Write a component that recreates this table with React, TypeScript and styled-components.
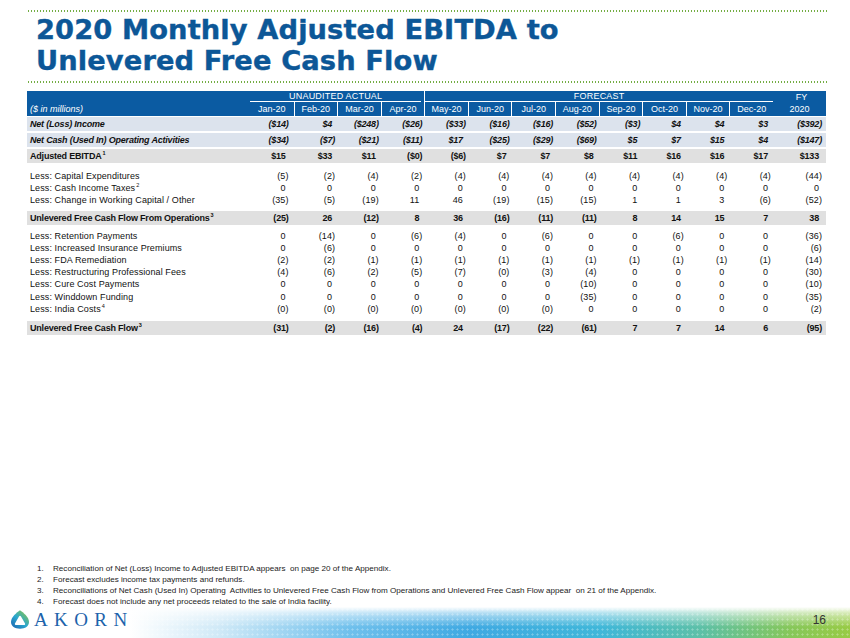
import React from 'react';
import styled, { createGlobalStyle } from 'styled-components';

const GlobalStyle = createGlobalStyle`
  html, body {
    margin: 0;
    padding: 0;
    background: #fff;
  }
  body {
    font-family: 'Liberation Sans', Arial, sans-serif;
  }
`;

type RowKind = 'net' | 'sub' | 'plain';

interface IRow {
    label: string;
    sup?: string;
    kind: RowKind;
    gap?: number;
    values: Array<string>;
}

const MONTHS = ['Jan-20', 'Feb-20', 'Mar-20', 'Apr-20', 'May-20', 'Jun-20', 'Jul-20', 'Aug-20', 'Sep-20', 'Oct-20', 'Nov-20', 'Dec-20'];

const ROWS: Array<IRow> = [
    { label: 'Net (Loss) Income', kind: 'net', gap: 1, values: ['($14)', '$4', '($248)', '($26)', '($33)', '($16)', '($16)', '($52)', '($3)', '$4', '$4', '$3', '($392)'] },
    { label: 'Net Cash (Used In) Operating Activities', kind: 'net', gap: 2, values: ['($34)', '($7)', '($21)', '($11)', '$17', '($25)', '($29)', '($69)', '$5', '$7', '$15', '$4', '($147)'] },
    { label: 'Adjusted EBITDA', sup: '1', kind: 'sub', gap: 2, values: ['$15', '$33', '$11', '($0)', '($6)', '$7', '$7', '$8', '$11', '$16', '$16', '$17', '$133'] },
    { label: 'Less:  Capital Expenditures', kind: 'plain', gap: 7, values: ['(5)', '(2)', '(4)', '(2)', '(4)', '(4)', '(4)', '(4)', '(4)', '(4)', '(4)', '(4)', '(44)'] },
    { label: 'Less:  Cash Income Taxes', sup: '2', kind: 'plain', values: ['0', '0', '0', '0', '0', '0', '0', '0', '0', '0', '0', '0', '0'] },
    { label: 'Less:  Change in Working Capital / Other', kind: 'plain', values: ['(35)', '(5)', '(19)', '11', '46', '(19)', '(15)', '(15)', '1', '1', '3', '(6)', '(52)'] },
    { label: 'Unlevered Free Cash Flow From Operations', sup: '3', kind: 'sub', gap: 4, values: ['(25)', '26', '(12)', '8', '36', '(16)', '(11)', '(11)', '8', '14', '15', '7', '38'] },
    { label: 'Less:  Retention Payments', kind: 'plain', gap: 5, values: ['0', '(14)', '0', '(6)', '(4)', '0', '(6)', '0', '0', '(6)', '0', '0', '(36)'] },
    { label: 'Less:  Increased Insurance Premiums', kind: 'plain', values: ['0', '(6)', '0', '0', '0', '0', '0', '0', '0', '0', '0', '0', '(6)'] },
    { label: 'Less:  FDA Remediation', kind: 'plain', values: ['(2)', '(2)', '(1)', '(1)', '(1)', '(1)', '(1)', '(1)', '(1)', '(1)', '(1)', '(1)', '(14)'] },
    { label: 'Less:  Restructuring Professional Fees', kind: 'plain', values: ['(4)', '(6)', '(2)', '(5)', '(7)', '(0)', '(3)', '(4)', '0', '0', '0', '0', '(30)'] },
    { label: 'Less:  Cure Cost Payments', kind: 'plain', values: ['0', '0', '0', '0', '0', '0', '0', '(10)', '0', '0', '0', '0', '(10)'] },
    { label: 'Less:  Winddown Funding', kind: 'plain', values: ['0', '0', '0', '0', '0', '0', '0', '(35)', '0', '0', '0', '0', '(35)'] },
    { label: 'Less:  India Costs', sup: '4', kind: 'plain', values: ['(0)', '(0)', '(0)', '(0)', '(0)', '(0)', '(0)', '0', '0', '0', '0', '0', '(2)'] },
    { label: 'Unlevered Free Cash Flow', sup: '3', kind: 'sub', gap: 6, values: ['(31)', '(2)', '(16)', '(4)', '24', '(17)', '(22)', '(61)', '7', '7', '14', '6', '(95)'] },
];

const NOTES = [
    'Reconciliation of Net (Loss) Income to Adjusted EBITDA appears  on page 20 of the Appendix.',
    'Forecast excludes income tax payments and refunds.',
    'Reconciliations of Net Cash (Used In) Operating  Activities to Unlevered Free Cash Flow from Operations and Unlevered Free Cash Flow appear  on 21 of the Appendix.',
    'Forecast does not include any net proceeds related to the sale of India facility.',
];

const Slide = styled.div`
    width: 850px;
    height: 638px;
    overflow: hidden;
    display: flex;
    flex-direction: column;
    background: #fff;
`;

const TitleBlock = styled.header`
    padding-top: 10px;
`;

const DottedRule = styled.div`
    margin: 0 23px 0 27px;
    height: 2px;
    background-image: radial-gradient(circle, #74ad44 0.75px, transparent 1.05px);
    background-size: 3px 2px;
    background-repeat: repeat-x;
`;

const Title = styled.h1`
    margin: 2px 0 5px 36px;
    font-family: 'DejaVu Sans', Verdana, sans-serif;
    font-weight: bold;
    font-size: 27.3px;
    line-height: 31px;
    color: #0c5797;
    letter-spacing: 0.1px;
    -webkit-text-stroke: 0.4px #0c5797;
`;

const Table = styled.div`
    margin: 8px 0 0 27px;
    width: 799px;
    font-size: 9px;
    color: #111;
`;

const Grid = styled.div`
    display: grid;
    grid-template-columns: 223px repeat(12, 1fr) 53px;
`;

const Head = styled(Grid)`
    background: #0b5ba2;
    color: #fff;
    grid-template-rows: 11px 14px;
`;

const GroupLabel = styled.div<{ $span: number; $split?: boolean }>`
    grid-column: span ${(p) => p.$span};
    display: flex;
    align-items: flex-end;
    justify-content: center;
    margin-right: ${(p) => (p.$split ? 0 : 3)}px;
    border-bottom: 1px solid #fff;
    border-left: ${(p) => (p.$split ? '1px solid #fff' : 'none')};
    letter-spacing: 0.2px;
    line-height: 10px;
`;

const FyLabel = styled.div`
    display: flex;
    align-items: flex-end;
    justify-content: center;
    line-height: 10px;
    padding-left: 4px;
`;

const UnitsLabel = styled.div`
    grid-column: 1;
    font-style: italic;
    display: flex;
    align-items: center;
    padding-left: 3px;
`;

const MonthLabel = styled.div<{ $sep: boolean }>`
    display: flex;
    align-items: center;
    justify-content: center;
    border-left: ${(p) => (p.$sep ? '1px solid #fff' : 'none')};
`;

const DataRow = styled(Grid)<{ $kind: RowKind; $gap: number }>`
    margin-top: ${(p) => p.$gap}px;
    height: ${(p) => (p.$kind === 'plain' ? '12.2px' : '14px')};
    align-items: center;
    background: ${(p) => (p.$kind === 'net' ? '#dce3ed' : p.$kind === 'sub' ? '#e0e0e0' : 'transparent')};
    font-weight: ${(p) => (p.$kind === 'plain' ? 'normal' : 'bold')};
    font-style: ${(p) => (p.$kind === 'net' ? 'italic' : 'normal')};
    letter-spacing: ${(p) => (p.$kind === 'plain' ? '0.1px' : '-0.2px')};
`;

const Label = styled.div`
    padding-left: 3px;
    white-space: nowrap;
`;

const Sup = styled.sup`
    font-size: 5.5px;
    line-height: 0;
    vertical-align: 4px;
    margin-left: 1px;
`;

const Value = styled.div<{ $paren: boolean }>`
    text-align: right;
    white-space: nowrap;
    padding-right: ${(p) => (p.$paren ? 2 : 5)}px;

    &:nth-child(2) {
        padding-right: ${(p) => (p.$paren ? 5 : 8)}px;
    }

    &:last-child {
        padding-right: ${(p) => (p.$paren ? 4 : 7)}px;
    }
`;

const Spacer = styled.div`
    flex: 1;
`;

const Notes = styled.ol`
    margin: 0;
    padding: 0 0 0 37px;
    list-style: none;
    font-size: 8.1px;
    line-height: 11px;
    color: #222;
`;

const Note = styled.li`
    display: flex;
    white-space: pre;
`;

const NoteNum = styled.span`
    width: 16px;
    flex: none;
`;

const Footer = styled.footer`
    height: 31px;
    display: flex;
    align-items: center;
    padding: 0 24px 6px 10px;
    box-sizing: border-box;
    background-color: #fff;
    background-image:
        linear-gradient(to bottom, #fff 0px, rgba(255, 255, 255, 0.55) 7px, rgba(255, 255, 255, 0) 20px),
        radial-gradient(circle, rgba(255, 255, 255, 0.3) 0.9px, transparent 1.2px),
        linear-gradient(to right, #fff 0px, #fff 130px, #cfe9f7 220px, #6fc0ec 350px, #3fa9e2 470px, #3fb7d9 600px, #5cc0a8 700px, #86c75a 790px, #98cb45 850px);
    background-size: 100% 100%, 5px 5px, 100% 100%;
`;

const Logo = styled.div`
    display: flex;
    align-items: center;
    gap: 4px;
`;

const LogoWord = styled.span`
    font-family: 'Liberation Serif', 'Times New Roman', serif;
    font-size: 19px;
    letter-spacing: 6.4px;
    color: #1d63ab;
    line-height: 1;
`;

const PageNum = styled.span`
    margin-left: auto;
    font-size: 12px;
    color: #333;
`;

const LogoMark: React.FC = () => (
    <svg width="20" height="21" viewBox="0 0 24 25">
        <defs>
            <linearGradient id="akMark" x1="0" y1="1" x2="0.9" y2="0">
                <stop offset="0" stopColor="#1b5fae" />
                <stop offset="0.5" stopColor="#2aa8cf" />
                <stop offset="1" stopColor="#8dc63f" />
            </linearGradient>
        </defs>
        <path
            d="M12 1.5 C15.8 4.2 22.8 9.6 22.8 15.6 C22.8 20.6 18.2 23.6 12 23.6 C5.8 23.6 1.2 20.6 1.2 15.6 C1.2 9.6 8.2 4.2 12 1.5 Z"
            fill="url(#akMark)"
        />
        <path d="M12 9.2 L17 18 L7 18 Z" fill="#fff" stroke="#fff" strokeWidth="2.4" strokeLinejoin="round" />
    </svg>
);

const App: React.FC = () => {
    return (
        <>
            <GlobalStyle />
            <Slide>
                <TitleBlock>
                    <DottedRule />
                    <Title>
                        2020 Monthly Adjusted EBITDA to
                        <br />
                        Unlevered Free Cash Flow
                    </Title>
                    <DottedRule />
                </TitleBlock>

                <Table>
                    <Head>
                        <div />
                        <GroupLabel $span={4}>UNAUDITED ACTUAL</GroupLabel>
                        <GroupLabel $span={8} $split>FORECAST</GroupLabel>
                        <FyLabel>FY</FyLabel>
                        <UnitsLabel>($ in millions)</UnitsLabel>
                        {MONTHS.map((m, i) => (
                            <MonthLabel key={m} $sep={i > 0}>{m}</MonthLabel>
                        ))}
                        <MonthLabel $sep={false}>2020</MonthLabel>
                    </Head>

                    {ROWS.map((row) => (
                        <DataRow key={row.label} $kind={row.kind} $gap={row.gap ?? 0}>
                            <Label>
                                {row.label}
                                {row.sup && <Sup>{row.sup}</Sup>}
                            </Label>
                            {row.values.map((v, i) => (
                                <Value key={i} $paren={v.endsWith(')')}>{v}</Value>
                            ))}
                        </DataRow>
                    ))}
                </Table>

                <Spacer />

                <Notes>
                    {NOTES.map((n, i) => (
                        <Note key={i}>
                            <NoteNum>{i + 1}.</NoteNum>
                            {n}
                        </Note>
                    ))}
                </Notes>

                <Footer>
                    <Logo>
                        <LogoMark />
                        <LogoWord>AKORN</LogoWord>
                    </Logo>
                    <PageNum>16</PageNum>
                </Footer>
            </Slide>
        </>
    );
};

export default App;
